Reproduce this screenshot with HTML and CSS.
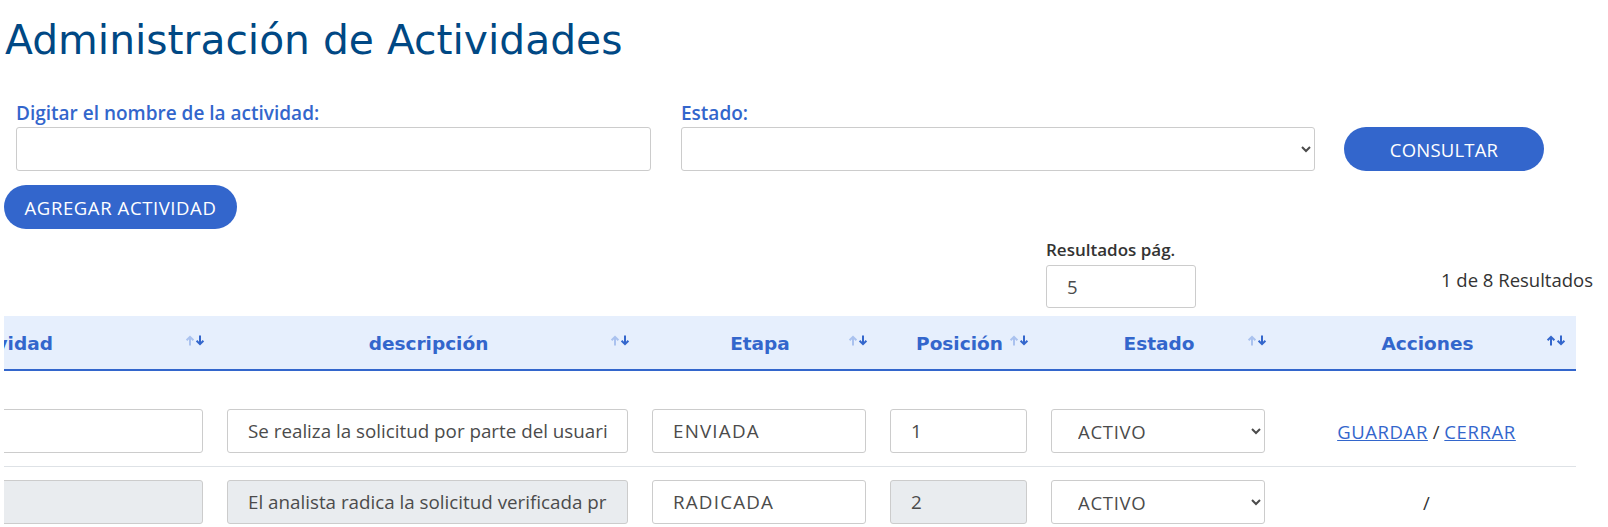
FILE: index.html
```html
<!DOCTYPE html>
<html lang="es">
<head>
<meta charset="utf-8">
<title>Administración de Actividades</title>
<link rel="stylesheet" href="styles.css">
</head>
<body>
<div class="page">
  <h1 class="title">Administración de Actividades</h1>

  <div class="filters">
    <div class="field field-name">
      <label class="label">Digitar el nombre de la actividad:</label>
      <input class="control" type="text">
    </div>
    <div class="field field-state">
      <label class="label">Estado:</label>
      <select class="control select"><option></option></select>
    </div>
    <button class="btn btn-consult" type="button">CONSULTAR</button>
  </div>

  <button class="btn btn-add" type="button">AGREGAR ACTIVIDAD</button>

  <div class="results">
    <div class="per-page">
      <label class="per-page-label">Resultados pág.</label>
      <input class="control per-page-input" type="text" value="5">
    </div>
    <div class="count">1 de 8 Resultados</div>
  </div>

  <div class="table-wrap">
    <table class="grid">
      <colgroup>
        <col class="c1"><col class="c2"><col class="c3"><col class="c4"><col class="c5"><col class="c6">
      </colgroup>
      <thead>
        <tr>
          <th class="th-first"><div class="th-in"><span class="th-text">Actividad</span><svg class="sort" viewBox="0 0 20 11" width="20" height="11"><path class="up" d="M5 10.5V1.8M1.6 5.2L5 1.8L8.4 5.2"/><path class="down" d="M15 0.5V9.2M11.6 5.8L15 9.2L18.4 5.8"/></svg></div></th>
          <th><div class="th-in"><span class="th-text">descripción</span><svg class="sort" viewBox="0 0 20 11" width="20" height="11"><path class="up" d="M5 10.5V1.8M1.6 5.2L5 1.8L8.4 5.2"/><path class="down" d="M15 0.5V9.2M11.6 5.8L15 9.2L18.4 5.8"/></svg></div></th>
          <th><div class="th-in"><span class="th-text">Etapa</span><svg class="sort" viewBox="0 0 20 11" width="20" height="11"><path class="up" d="M5 10.5V1.8M1.6 5.2L5 1.8L8.4 5.2"/><path class="down" d="M15 0.5V9.2M11.6 5.8L15 9.2L18.4 5.8"/></svg></div></th>
          <th><div class="th-in"><span class="th-text">Posición</span><svg class="sort" viewBox="0 0 20 11" width="20" height="11"><path class="up" d="M5 10.5V1.8M1.6 5.2L5 1.8L8.4 5.2"/><path class="down" d="M15 0.5V9.2M11.6 5.8L15 9.2L18.4 5.8"/></svg></div></th>
          <th><div class="th-in"><span class="th-text">Estado</span><svg class="sort" viewBox="0 0 20 11" width="20" height="11"><path class="up" d="M5 10.5V1.8M1.6 5.2L5 1.8L8.4 5.2"/><path class="down" d="M15 0.5V9.2M11.6 5.8L15 9.2L18.4 5.8"/></svg></div></th>
          <th><div class="th-in"><span class="th-text">Acciones</span><svg class="sort sort-active" viewBox="0 0 20 11" width="20" height="11"><path class="up" d="M5 10.5V1.8M1.6 5.2L5 1.8L8.4 5.2"/><path class="down" d="M15 0.5V9.2M11.6 5.8L15 9.2L18.4 5.8"/></svg></div></th>
        </tr>
      </thead>
      <tbody>
        <tr>
          <td><input class="control cell-input" type="text" value=""></td>
          <td><input class="control cell-input" type="text" value="Se realiza la solicitud por parte del usuario"></td>
          <td><input class="control cell-input caps" type="text" value="ENVIADA"></td>
          <td><input class="control cell-input" type="text" value="1"></td>
          <td><select class="control select cell-select"><option>ACTIVO</option></select></td>
          <td class="actions"><a href="#" class="link">GUARDAR</a> / <a href="#" class="link">CERRAR</a></td>
        </tr>
        <tr>
          <td><input class="control cell-input" type="text" value="" disabled></td>
          <td><input class="control cell-input" type="text" value="El analista radica la solicitud verificada previamente" disabled></td>
          <td><input class="control cell-input caps" type="text" value="RADICADA"></td>
          <td><input class="control cell-input" type="text" value="2" disabled></td>
          <td><select class="control select cell-select"><option>ACTIVO</option></select></td>
          <td class="actions">/</td>
        </tr>
      </tbody>
    </table>
  </div>
</div>
</body>
</html>
```

FILE: styles.css
```css
html, body {
  margin: 0;
  padding: 0;
  background: #ffffff;
}

body {
  font-family: "Open Sans", "Noto Sans", sans-serif;
  font-size: 18.5px;
  color: #333333;
  overflow: hidden;
}

.page {
  padding: 0 15px 0 4px;
}

.title {
  margin: 16px 0 0 1px;
  font-family: "DejaVu Sans", sans-serif;
  font-weight: normal;
  font-size: 40.8px;
  line-height: 48px;
  color: #004884;
}

.filters {
  display: flex;
  align-items: flex-end;
  margin-top: 37px;
  padding-left: 12px;
}

.field {
  display: flex;
  flex-direction: column;
}

.field-name {
  width: 635px;
  margin-right: 30px;
}

.field-state {
  width: 634px;
  margin-right: 29px;
}

.label {
  font-size: 19px;
  font-weight: 600;
  color: #3366cc;
  line-height: 24px;
  margin-bottom: 2px;
}

.control {
  box-sizing: border-box;
  width: 100%;
  height: 44px;
  margin: 0;
  padding: 0 20px;
  font: inherit;
  color: #4b4b4b;
  background-color: #ffffff;
  border: 1px solid #cccccc;
  border-radius: 3px;
  outline: none;
}

.control:disabled {
  background-color: #e9ecef;
  color: #4b4b4b;
}

.select {
  padding-left: 22px;
  padding-right: 8px;
}

.cell-input {
  font-size: 18.8px;
}

.caps {
  letter-spacing: 1.2px;
}

.cell-select {
  letter-spacing: 0.7px;
}

.btn {
  box-sizing: border-box;
  height: 44px;
  margin: 0;
  padding: 0;
  border: none;
  border-radius: 22px;
  background: #3366cc;
  color: #ffffff;
  font: inherit;
  cursor: pointer;
}

.btn-consult {
  width: 200px;
  letter-spacing: 0.2px;
}

.btn-add {
  display: block;
  width: 233px;
  margin-top: 14px;
  letter-spacing: 0.6px;
}

.results {
  display: flex;
  margin-top: 9px;
}

.per-page {
  display: flex;
  flex-direction: column;
  margin-left: 1042px;
}

.per-page-label {
  font-size: 17px;
  font-weight: 600;
  line-height: 24px;
  color: #333333;
}

.per-page-input {
  width: 150px;
  height: 43px;
  margin-top: 3px;
}

.count {
  margin-left: auto;
  margin-top: 30px;
  line-height: 24px;
  color: #333333;
}

.table-wrap {
  margin-top: 8px;
  margin-right: 15px;
  overflow: hidden;
}

.grid {
  table-layout: fixed;
  border-collapse: collapse;
  width: 1777px;
  margin-left: -205px;
}

.c1 { width: 416px; }
.c2 { width: 425px; }
.c3 { width: 238px; }
.c4 { width: 161px; }
.c5 { width: 238px; }
.c6 { width: 299px; }

.grid th {
  height: 53px;
  padding: 0 10px 0 12px;
  background: #e6effd;
  border-bottom: 2px solid #3366cc;
  font-family: "DejaVu Sans", sans-serif;
  font-weight: bold;
  font-size: 18.5px;
  color: #3366cc;
}

.grid th.th-first {
  padding-left: 4px;
}

.th-in {
  display: grid;
  grid-template-columns: 1fr auto 1fr;
  align-items: center;
}

.th-text {
  grid-column: 2;
  white-space: nowrap;
  padding-top: 2px;
}

.sort {
  grid-column: 3;
  justify-self: end;
  margin-bottom: 4px;
  fill: none;
  stroke-width: 2;
}

.sort .up {
  stroke: #aac2ef;
}

.sort .down {
  stroke: #3366cc;
}

.sort-active .up {
  stroke: #3366cc;
}

.grid td {
  padding: 13px 12px;
  border-bottom: 1px solid #dee2e6;
  vertical-align: middle;
}

.grid tbody tr:first-child td {
  padding-top: 38px;
}

.actions {
  text-align: center;
  color: #333333;
}

.link {
  color: #3366cc;
  text-decoration: underline;
  letter-spacing: 0.6px;
}
```
